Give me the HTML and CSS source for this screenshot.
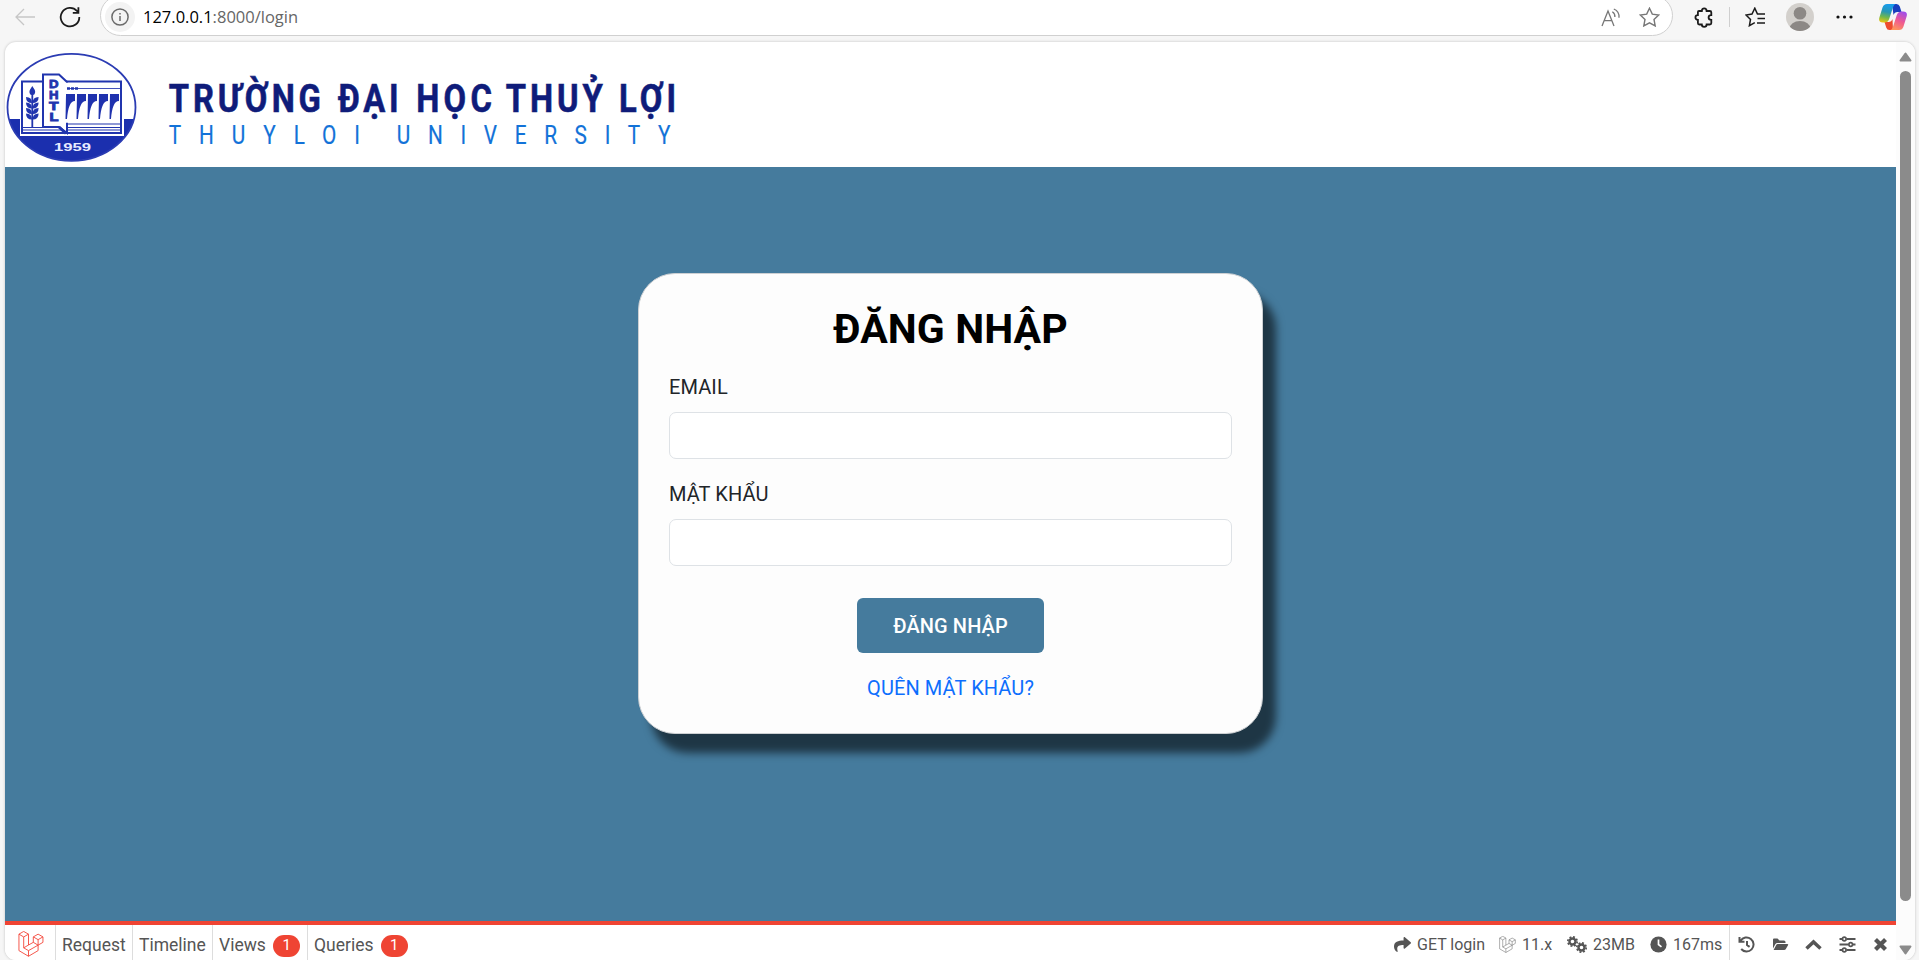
FILE: index.html
```html
<!DOCTYPE html>
<html lang="vi">
<head>
<meta charset="utf-8">
<title>Đăng nhập</title>
<link rel="stylesheet" href="styles.css">
</head>
<body>
<svg class="defs" width="0" height="0">
  <symbol id="laravel" viewBox="0 0 50 52">
    <path fill="none" stroke="currentColor" stroke-width="1.8" stroke-linejoin="round" d="M.9 6.3 10.4.9 20 6.3 10.4 11.9ZM.9 6.3V39.2L20 50.5 39.2 39.2V28.3M10.4 11.9V33.7L20 39.2V50.5M20 6.3V28L10.4 33.7M20 39.2 39.2 28.3 29.6 22.7 20 28M29.6 11.8 39.2 6.3 48.9 11.8 39.2 17.3ZM29.6 11.8V22.7M48.9 11.8V22.7L39.2 28.3V17.3"/>
  </symbol>
</svg>
<header class="toolbar">
  <svg class="back" width="22" height="20" viewBox="0 0 22 20"><path d="M21 10H2M10 2 2 10l8 8"/></svg>
  <svg class="reload" width="22" height="22" viewBox="0 0 22 22"><path d="M20.3 11A9.3 9.3 0 1 1 18 5L19.7 7M19.4 1.2V6.9H13.8"/></svg>
  <div class="address">
    <span class="info"><svg width="18" height="18" viewBox="0 0 18 18"><circle cx="9" cy="9" r="8.1"/><path d="M9 8v5M9 5v1.6"/></svg></span>
    <span class="url"><b>127.0.0.1</b>:8000/login</span>
    <svg class="read" width="20" height="19" viewBox="0 0 20 19"><path d="M1 18 7 3l6 15M3.2 12.7h7.6M11.3 3.8c1.9 1.1 2.8 3 2.6 5.2M12.8 1c3.6 1.5 5.6 4.7 5.2 8.8"/></svg>
    <svg class="star" width="21" height="20" viewBox="0 0 21 20"><path d="m10.5 1.2 2.8 5.9 6.4.9-4.7 4.5 1.2 6.4-5.7-3.1-5.7 3.1L6 12.500 1.300 8l6.400-.9Z"/></svg>
  </div>
  <svg class="puzzle" width="20" height="21" viewBox="0 0 20 21"><path d="M5 4H7.800C7.800.4 12.600.4 12.600 4H15.800Q17.300 4 17.300 5.500V8.200C13.700 8.200 13.700 12.800 17.300 12.800V16Q17.300 17.500 15.800 17.500H12.600C12.600 20.600 7.800 20.600 7.800 17.500H5.200Q3.900 17.500 3.900 16V12.800C.6 12.800.6 8.200 3.900 8.200V5Q3.900 4 5 4Z"/></svg>
  <i class="rule"></i>
  <svg class="favs" width="21" height="20" viewBox="0 0 21 20"><path d="M12.500 7.100 9.800 1.200 7 7.100 1 8l4.500 4.500-1.100 6.200 5.400-3M12 7h8M12.500 11.500H20M12 16h8"/></svg>
  <svg class="avatar" width="28" height="28" viewBox="0 0 28 28"><defs><clipPath id="av"><circle cx="14" cy="14" r="14"/></clipPath></defs><g clip-path="url(#av)"><rect width="28" height="28" fill="#d3d0cc"/><circle cx="14" cy="10.300" r="6.300" fill="#8c8885"/><ellipse cx="14" cy="26" rx="10.500" ry="8" fill="#8c8885"/></g></svg>
  <svg class="dots" width="17" height="4" viewBox="0 0 17 4"><circle cx="2" cy="2" r="1.600"/><circle cx="8.500" cy="2" r="1.600"/><circle cx="15" cy="2" r="1.600"/></svg>
  <svg class="copilot" width="28" height="26" viewBox="0 0 28 26">
    <defs>
      <linearGradient id="c1" x1=".4" y1="0" x2=".2" y2="1"><stop offset="0" stop-color="#189ceb"/><stop offset=".4" stop-color="#2797b5"/><stop offset=".7" stop-color="#73b84a"/><stop offset="1" stop-color="#f2c510"/></linearGradient>
      <linearGradient id="c2" x1=".7" y1="0" x2=".3" y2="1"><stop offset="0" stop-color="#a14ee8"/><stop offset=".5" stop-color="#ef5a91"/><stop offset="1" stop-color="#ff965a"/></linearGradient>
    </defs>
    <path fill="#183ebe" d="M13 0h4.500Q20 0 20.800 2.600L22.500 8h-4q-3 0-4 3Z"/>
    <path fill="#ee4b2f" d="M14 26h-3.500Q8 26 7.200 23.400L5.500 18h4q3 0 4-3Z"/>
    <path fill="url(#c1)" d="M8 0h8.500q-1.800.7-2.500 3.200L10.200 15Q9 18.500 5.500 18.500H4Q-1 18.500.4 13.500L3.500 3.500Q4.600 0 8 0Z"/>
    <path fill="url(#c2)" d="M20 26h-8.500q1.800-.7 2.500-3.200L17.800 11q1.200-3.500 4.700-3.500H24q5 0 3.600 5L24.500 22.500Q23.400 26 20 26Z"/>
  </svg>
</header>

<div class="window">
  <div class="page">
    <div class="brand">
      <svg width="690" height="125" viewBox="5 42 690 125">
        <defs><clipPath id="oval"><ellipse cx="71.500" cy="107.300" rx="64" ry="53.500"/></clipPath></defs>
        <ellipse cx="71.500" cy="107.300" rx="64" ry="53.500" fill="#fff"/>
        <g clip-path="url(#oval)"><rect x="5" y="119" width="132" height="45" fill="#1b2fae"/></g>
        <ellipse cx="71.500" cy="107.300" rx="64" ry="53.500" fill="none" stroke="#2b3cb3" stroke-width="1.800"/>
        <g stroke="#2135ae" fill="#fff" stroke-width="2">
          <path stroke="#fff" stroke-width="4" d="M22 82H122V134H22Z"/>
          <path d="M22 81.500H121V133H22Z"/>
          <path d="M22 127.500H121M22 130H121M66 124H121" stroke-width="1.200"/>
          <path d="M43 74.500H59L67 82V133L59 127H43Z"/>
          <path d="M66 133.500 59 127" stroke-width="3"/>
        </g>
        <path fill="#fff" d="M65 82.700h3v40h-3z"/>
        <path stroke="#4351ba" stroke-width="1.200" d="M67 88.500H120"/>
        <path stroke="#2135ae" stroke-width="2.500" stroke-dasharray="3 1" d="M67 88.500H78"/>
        <path fill="#1f32ae" d="M66 94h9v7c-5 0-7 7-8 18h-1.500zM77 94h9v7c-5 0-7 7-8 18h-1.500zM88 94h9v7c-5 0-7 7-8 18h-1.500zM99 94h9v7c-5 0-7 7-8 18h-1.500zM110 94h9v7c-5 0-7 7-8 18h-1.500z"/>
        <g fill="#2135ae"><path d="M32.300 86q6 8 0 9.500q-6-1.500 0-9.500M31.400 95h1.800v32h-1.800z"/>
          <path d="M26 97q6 0 6 6-6 0-6-6M38.600 97q-6 0-6 6 6 0 6-6M26 102.500q6 0 6 6-6 0-6-6M38.600 102.500q-6 0-6 6 6 0 6-6M26 108q6 0 6 6-6 0-6-6M38.600 108q-6 0-6 6 6 0 6-6M26 113.500q6 0 6 6-6 0-6-6M38.600 113.500q-6 0-6 6 6 0 6-6"/></g>
        <g class="dhtl"><text x="49" y="87.500" textLength="9.500" lengthAdjust="spacingAndGlyphs">D</text><text x="49" y="98.800" textLength="9.500" lengthAdjust="spacingAndGlyphs">H</text><text x="49" y="110" textLength="9.500" lengthAdjust="spacingAndGlyphs">T</text><text x="49.500" y="121.300" textLength="9" lengthAdjust="spacingAndGlyphs">L</text></g>
        <text class="year" x="54" y="151" textLength="37" lengthAdjust="spacingAndGlyphs">1959</text>
        <g class="name" transform="scale(.84 1)">
          <text x="201" y="111.800" textLength="181">TRƯỜNG</text>
          <text x="402.500" y="111.800" textLength="72">ĐẠI</text>
          <text x="495.500" y="111.800" textLength="90">HỌC</text>
          <text x="602" y="111.800" textLength="115.500">THUỶ</text>
          <text x="737" y="111.800" textLength="68">LỢI</text>
        </g>
        <g class="latin" transform="scale(.8 1)">
          <text x="211" y="144" textLength="239">THUYLOI</text>
          <text x="496" y="144" textLength="342">UNIVERSITY</text>
        </g>
      </svg>
    </div>
    <main>
      <form class="card">
        <h1>ĐĂNG NHẬP</h1>
        <label for="email">EMAIL</label>
        <input id="email" type="text">
        <label for="password">MẬT KHẨU</label>
        <input id="password" type="password">
        <button type="button">ĐĂNG NHẬP</button>
        <a>QUÊN MẬT KHẨU?</a>
      </form>
    </main>
    <footer class="debug">
      <span class="tab mark"><svg width="26" height="26"><use href="#laravel"/></svg></span>
      <span class="tab w1">Request</span>
      <span class="tab w2">Timeline</span>
      <span class="tab w3">Views <em>1</em></span>
      <span class="tab w4">Queries <em>1</em></span>
      <div class="stats">
        <svg width="17" height="17" viewBox="0 0 512 512"><path fill="currentColor" d="M503.700 189.800 327.700 37.900C312.300 24.500 288 35.300 288 56v80C127.400 137.900 0 170 0 322.300c0 61.500 39.600 122.300 83.300 154.200 13.700 9.900 33.100-2.600 28.100-18.700C66 312.800 132.900 274.300 288 272v88c0 20.700 24.300 31.500 39.700 18.200l176-152c11-9.600 11-26.800 0-36.400z"/></svg>
        <span class="s1">GET login</span>
        <svg class="thin" width="17" height="17"><use href="#laravel"/></svg>
        <span class="s2">11.x</span>
        <svg width="20" height="17" viewBox="0 0 20 17" fill="none" stroke="currentColor"><circle cx="5.500" cy="5.500" r="3" stroke-width="2.400"/><circle cx="5.500" cy="5.500" r="4.700" stroke-width="1.700" stroke-dasharray="1.900 1.790"/><circle cx="14.500" cy="11.500" r="3" stroke-width="2.400"/><circle cx="14.500" cy="11.500" r="4.700" stroke-width="1.700" stroke-dasharray="1.900 1.790"/></svg>
        <span class="s3">23MB</span>
        <svg width="17" height="17" viewBox="0 0 17 17"><circle cx="8.500" cy="8.500" r="8.100" fill="currentColor"/><path d="M8.500 3.500v5l3 2.300" fill="none" stroke="#fff" stroke-width="1.700"/></svg>
        <span class="s4">167ms</span>
      </div>
      <div class="tools">
        <svg width="17" height="17" viewBox="0 0 17 17"><path d="M2.600 4.800A7 7 0 1 1 3.200 13M1.500 1v4.800H6.500M9 5v4l2.600 1.900"/></svg>
        <svg width="17" height="17" viewBox="0 0 17 17"><path class="solid" d="M1 12.500V3.500Q1 2.500 2 2.500H5.500L7.500 4.500H12Q13.500 4.500 13.500 6V7H5.500Q4 7 3.300 8.300ZM1.600 14 4.200 9Q4.700 8 5.700 8H15.300Q16.700 8 16 9.200L13.700 13.200Q13.200 14 12.200 14Z"/></svg>
        <svg width="17" height="17" viewBox="0 0 17 17"><path class="bold" d="m1.500 12.500 7-6.500L15.500 12.500"/></svg>
        <svg width="17" height="17" viewBox="0 0 17 17"><path d="M.5 3H3M7.500 3H16.500M.5 8.500H9.500M14 8.500H16.500M.5 14H3M7.500 14H16.500"/><g class="knobs"><circle cx="5.300" cy="3" r="1.800"/><circle cx="11.700" cy="8.500" r="1.800"/><circle cx="5.300" cy="14" r="1.800"/></g></svg>
        <svg width="17" height="17" viewBox="0 0 17 17"><path class="cross" d="m3.500 3.500 10 10M13.500 3.500l-10 10"/></svg>
      </div>
    </footer>
  </div>
  <div class="scroll">
    <svg width="13" height="10" viewBox="0 0 13 10"><path d="M6.500 1.500 11.500 8.500H1.500Z"/></svg>
    <i></i>
    <svg width="13" height="10" viewBox="0 0 13 10"><path d="M6.500 8.500 11.500 1.500H1.500Z"/></svg>
  </div>
</div>
</body>
</html>
```
FILE: styles.css
```css
* { box-sizing: border-box; }
body {
  margin: 0;
  height: 960px;
  overflow: hidden;
  background: #f6f6f6;
  font-family: Roboto, "Noto Sans", sans-serif;
  display: flex;
  flex-direction: column;
}
.defs { position: absolute; }
svg { display: block; flex: none; }

.toolbar {
  height: 42px;
  padding-bottom: 8px;
  display: flex;
  align-items: center;
  flex: none;
}
.toolbar svg { fill: none; stroke: #1b1b1b; stroke-width: 1.500; }
.toolbar .back { margin-left: 14px; stroke: #c6c6c6; stroke-width: 1.300; }
.toolbar .reload { margin-left: 23px; stroke-width: 1.800; }
.address {
  width: 1573px;
  height: 41px;
  margin: -3px 0 0 19px;
  padding: 3px 0 0 4px;
  border: 1px solid #d0d0d0;
  border-radius: 21px;
  background: #fff;
  display: flex;
  align-items: center;
}
.info {
  width: 30px;
  height: 30px;
  border-radius: 50%;
  background: #f3f3f3;
  display: flex;
  align-items: center;
  justify-content: center;
}
.toolbar .info svg { stroke: #6a6a6a; }
.url {
  width: 1466px;
  flex: none;
  padding: 0 0 2px 8px;
  font: 16.500px "Open Sans", sans-serif;
  letter-spacing: 0;
  color: #666;
}
.url b { font-weight: 400; color: #000; }
.toolbar .read { stroke: #777; stroke-width: 1.300; }
.toolbar .star { margin-left: 18px; stroke: #777; stroke-width: 1.400; }
.puzzle { margin-left: 21px; }
.toolbar .puzzle { stroke-width: 1.800; }
.rule { width: 1px; height: 20px; margin: 0 15px 0 15px; background: #cfcfcf; }
.toolbar .avatar { margin-left: 20px; stroke: none; }
.toolbar .dots { margin-left: 22px; stroke: none; fill: #111; }
.toolbar .copilot { margin-left: 26px; stroke: none; }

.window {
  width: 1910px;
  height: 918px;
  margin-left: 5px;
  border-radius: 11px;
  overflow: hidden;
  background: #fff;
  box-shadow: 0 0 3px rgba(0, 0, 0, .22);
  display: flex;
}
.page { width: 1891px; display: flex; flex-direction: column; }
.brand { height: 125px; }
.dhtl { font: bold 10.500px "Liberation Sans", sans-serif; fill: #2135ae; stroke: #2135ae; stroke-width: .8; }
.year { font: bold 10.500px "Liberation Sans", sans-serif; fill: #e8ebff; }
.name { font: bold 39px Roboto, sans-serif; fill: #0f1c7a; stroke: #0f1c7a; stroke-width: .6; }
.latin { font: 26px Roboto, sans-serif; fill: #1272d8; stroke: #1272d8; stroke-width: .2; }

main {
  height: 754px;
  padding-top: 106px;
  background: #457b9d;
  display: flex;
  justify-content: center;
  align-items: flex-start;
}
.card {
  width: 625px;
  height: 461px;
  padding: 31px 30px 0;
  border: 1px solid #cdd0d3;
  border-radius: 37px;
  background: #fdfdfd;
  box-shadow: 13px 19px 8px rgba(0, 0, 0, .56);
  display: flex;
  flex-direction: column;
  color: #212529;
  font-size: 20px;
  line-height: 30px;
  letter-spacing: .1px;
}
h1 { margin: 0 0 19px; font-size: 41px; line-height: 48px; letter-spacing: .1px; text-align: center; color: #000; }
label { height: 40px; }
input {
  height: 47px;
  flex: none;
  margin: 0 0 20px;
  border: 1px solid #dee2e6;
  border-radius: 7px;
  background: #fff;
}
button {
  width: 187px;
  height: 55px;
  margin: 12px auto 20px;
  border: 0;
  border-radius: 6px;
  background: #457b9d;
  color: #fff;
  font: 500 20px Roboto, sans-serif;
  letter-spacing: .1px;
}
.card a { text-align: center; color: #0d6efd; }

.debug {
  height: 39px;
  border-top: 4px solid #ef4433;
  background: #fff;
  color: #555;
  display: flex;
  font-size: 17.500px;
  line-height: 40px;
}
.tab { border-right: 1px solid #ddd; padding-left: 6px; white-space: nowrap; }
.tab.mark { width: 51px; padding: 6px 0 0 13px; color: #f4463a; }
.w1 { width: 77px; }
.w2 { width: 80px; }
.w3 { width: 95px; }
.tab.w4 { width: 120px; border: 0; padding-left: 6px; }
em {
  display: inline-block;
  width: 27px;
  height: 22px;
  margin-left: 3px;
  border-radius: 11px;
  background: #ef4433;
  color: #fff;
  font: 15px/21px Roboto, sans-serif;
  text-align: center;
  vertical-align: 1px;
}
.stats {
  width: 336px;
  height: 35px;
  padding-top: 4px;
  margin-left: 966px;
  border-right: 1px solid #ddd;
  display: flex;
  align-items: center;
  font-size: 16px;
}
.stats span { padding-left: 6px; white-space: nowrap; }
.s1 { width: 88px; }
.s2 { width: 51px; }
.s3 { width: 63px; }
.thin { opacity: .8; }
.tools { display: flex; align-items: center; gap: 16.500px; padding: 4px 0 0 8px; }
.tools svg { fill: none; stroke: #555; stroke-width: 2; }
.tools .solid { fill: #555; stroke: none; }
.tools .bold { stroke-width: 3.500; }
.tools .cross { stroke-width: 4.200; }
.knobs { stroke-width: 1.700; }

.scroll {
  width: 19px;
  padding: 10px 0 4px;
  background: #fcfcfc;
  display: flex;
  flex-direction: column;
  align-items: center;
}
.scroll svg { fill: #8b8b8b; stroke: #8b8b8b; stroke-width: 2; stroke-linejoin: round; }
.scroll i { width: 11px; height: 830px; margin: 9px 0 44px; border-radius: 6px; background: #8b8b8b; }
```
